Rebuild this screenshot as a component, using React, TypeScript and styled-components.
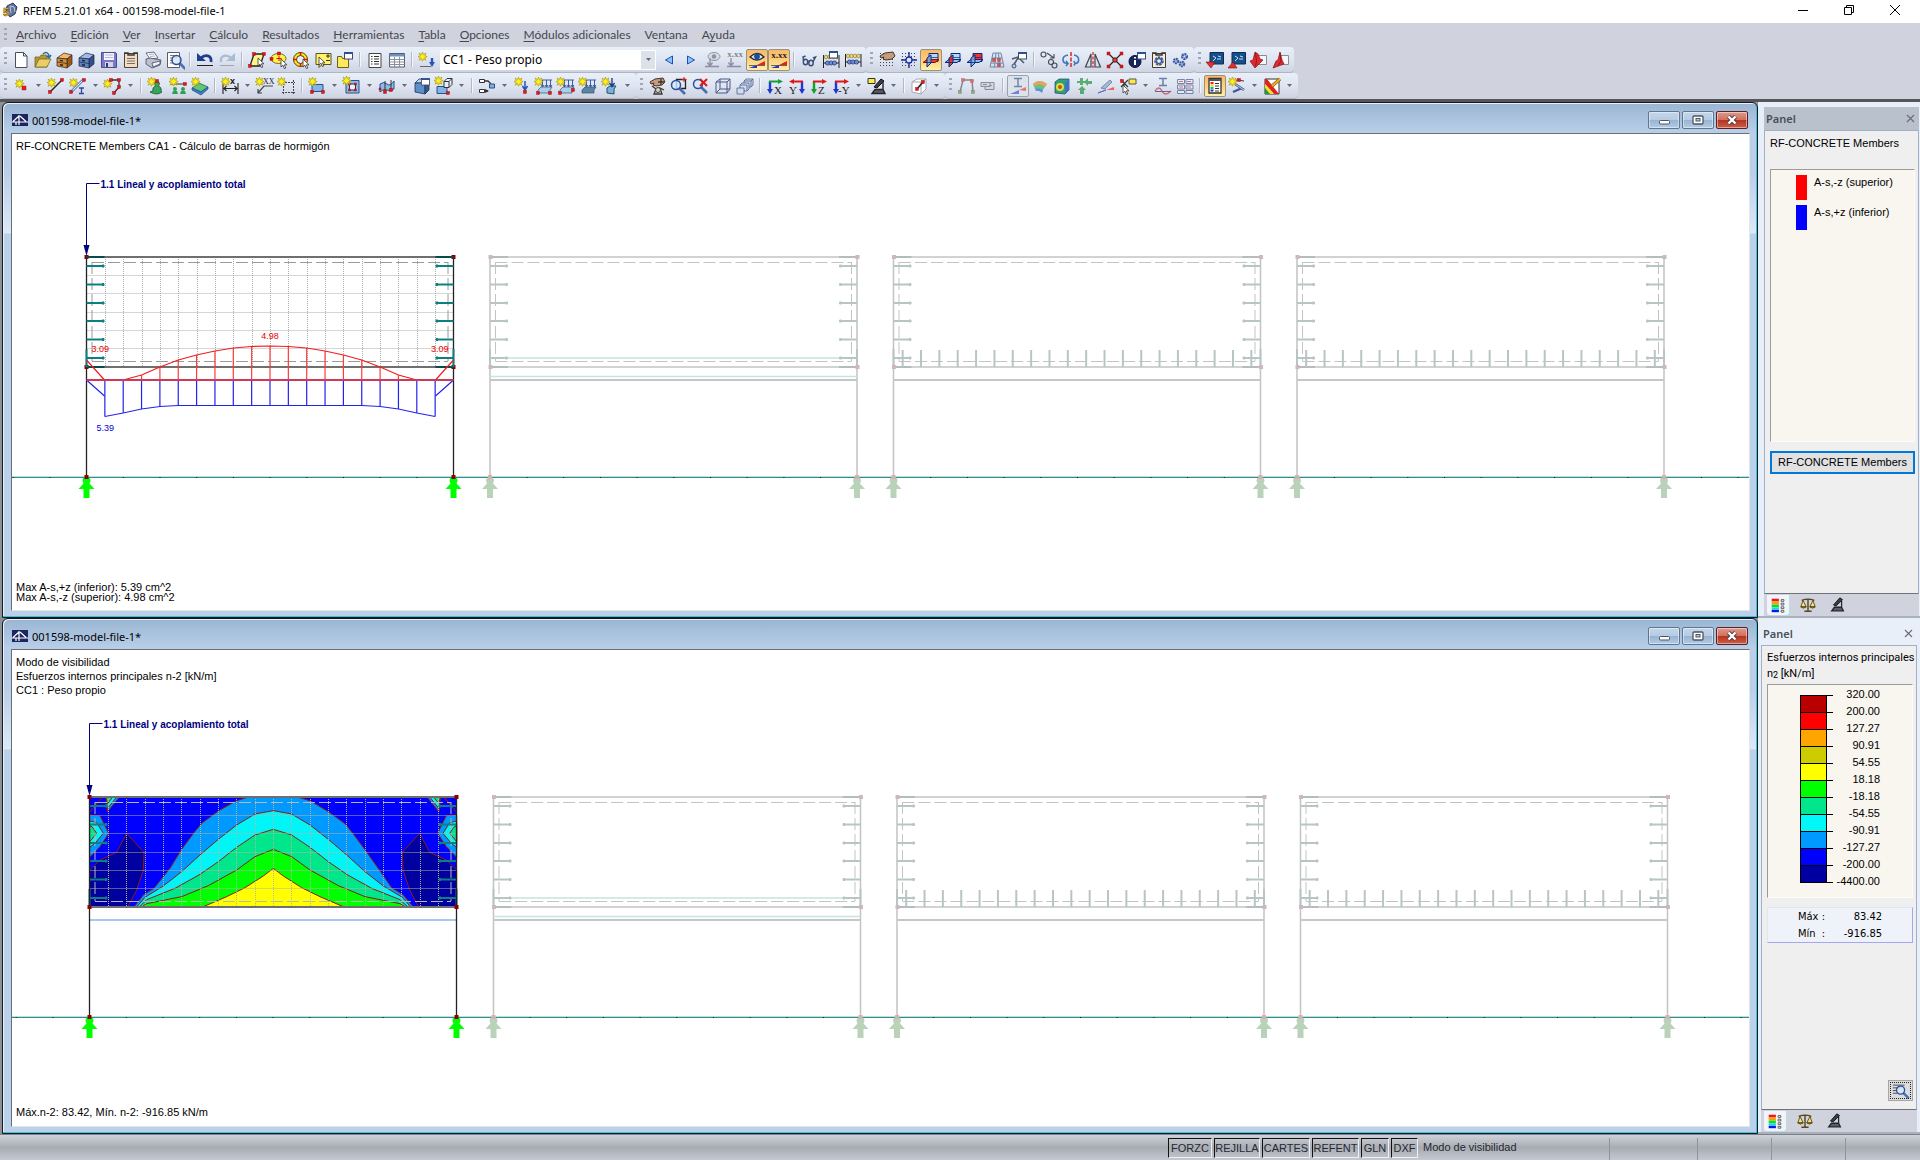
import React, { ReactNode } from 'react';
import styled, { createGlobalStyle, css } from 'styled-components';

const UI = 'Lato, "Noto Sans", sans-serif';
const SEGOE = '"Noto Sans", "Open Sans", sans-serif';
const TAHOMA = '"DejaVu Sans Condensed", "DejaVu Sans", sans-serif';
const ARIAL = '"Liberation Sans", Arial, sans-serif';

const Global = createGlobalStyle`
  *, *::before, *::after { box-sizing: border-box; }
  html, body { margin: 0; background: #d0d3dd; }
  body { font-family: ${UI}; font-size: 12px; color: #000; overflow: hidden; }
  button, select { font: inherit; color: inherit; margin: 0; }
  svg { display: block; }
`;

/* ---------- icon building blocks ---------- */

const Star = ({ x = 0, y = 0 }: { x?: number; y?: number }) => (
  <g transform={`translate(${x} ${y})`}>
    <path d="M4.500 0l1 2.600L8 1 6.700 3.600 9.200 4.600 6.600 5.600 8 8.200 5.500 6.800 4.500 9.200 3.500 6.800 1 8.200 2.400 5.600 0 4.600 2.400 3.600 1 1 3.500 2.600z" fill="#ffee1c" stroke="#a89a10" strokeWidth=".7" />
  </g>
);
const Dot = ({ x, y, c = '#e8141c', s = 4 }: { x: number; y: number; c?: string; s?: number }) => (
  <rect x={x - s / 2} y={y - s / 2} width={s} height={s} fill={c} stroke="#8c0a0a" strokeWidth=".4" />
);
const Cursor = ({ x, y }: { x: number; y: number }) => (
  <path transform={`translate(${x} ${y})`} d="M0 0v8l2-1.800L3.400 9.600l1.400-.6L3.400 5.800H6z" fill="#fff" stroke="#333" strokeWidth=".8" />
);
const Cabinet = ({ a, b, c }: { a: string; b: string; c: string }) => (
  <g stroke="#22252e" strokeWidth=".7">
    <path d="M2 8l7-5 8 2-5 4z" fill={a} />
    <path d="M12 9l5-4v9l-5 4z" fill={c} />
    <path d="M2 8l10 1v9l-10-2z" fill={b} />
    <path d="M2 12l10 1.500" />
    <path d="M5 10.500l3 .4M5 14.700l3 .5" stroke="#222" strokeWidth="1.400" />
  </g>
);
const Win = ({ x, y }: { x: number; y: number }) => (
  <g transform={`translate(${x} ${y})`}>
    <rect x=".5" y=".5" width="8" height="6.500" fill="#fff" stroke="#3b4a66" />
    <path d="M0 1.200h9" stroke="#2f4f9a" strokeWidth="1.600" />
  </g>
);
const GridDots = () => (
  <path d="M3.500 3v15M6.500 3v15M9.500 3v15M12.500 3v15M15.500 3v15" stroke="#444" strokeWidth="1" strokeDasharray="1 2" />
);
const Planes = ({ hot }: { hot: number }) => (
  <g stroke="#0c2a78" strokeLinejoin="round">
    <path d="M8 3.500h9v8H8z" fill={hot === 2 ? '#ff2a2a' : '#b4d8f6'} />
    <path d="M2 12.500l4-3h12l-4 3z" fill={hot === 0 ? '#ff3a1c' : '#8cc0ee'} stroke={hot === 0 ? '#8c1010' : '#0c2a78'} />
    <path d="M6 8l4-3v8l-4 4z" fill={hot === 1 ? '#f41c1c' : '#74aee6'} fillOpacity=".85" />
    <path d="M10 7.500h7M6 12.500h7" strokeWidth=".7" />
  </g>
);
const Abacus = ({ y = 4 }: { y?: number }) => (
  <g>
    <path d={`M2.500 ${y + 1}v13M18 ${y + 1}v13M2 ${y + 9}h16`} stroke="#222" />
    {[5, 8.5, 12, 15.5].map((x) => <circle key={x} cx={x} cy={y + 3} r="1.800" fill="#e8d878" stroke="#7c6c20" strokeWidth=".6" />)}
    {[6.5, 10, 13.5].map((x) => <circle key={x} cx={x} cy={y + 9} r="2.100" fill="#6d8ed6" stroke="#1d2c66" strokeWidth=".7" />)}
  </g>
);
const Lens = ({ x = 8, y = 8 }: { x?: number; y?: number }) => (
  <g>
    <path d={`M${x + 3} ${y + 3}l6 6`} stroke="#4a6fb0" strokeWidth="2.600" />
    <circle cx={x} cy={y} r="4.500" fill="#d5e8fb" fillOpacity=".8" stroke="#2c4f9e" strokeWidth="1.500" />
  </g>
);
const Axes = ({ h, v, mirror, label, tx = 9 }: { h: string; v: string; mirror?: boolean; label: string; tx?: number }) => (
  <g>
    <g transform={mirror ? 'translate(20 0) scale(-1 1)' : undefined}>
      <path d="M5 5v10" stroke={v} strokeWidth="2.400" />
      <path d="M2 13l3 5 3-5z" fill={v} />
      <path d="M4 5.500h11" stroke={h} strokeWidth="2" />
      <path d="M13 3l5 2.500-5 2.500z" fill={h} />
    </g>
    <text x={mirror ? 2 : tx} y="18" fontFamily="Liberation Serif, serif" fontSize="11" fill="#222">{label}</text>
  </g>
);
const Screen = ({ up }: { up?: boolean }) => (
  <g>
    <path d="M5 2.500h13.500V14H5z" fill="#174f8a" stroke="#0e2c52" />
    <path d="M8 6l3 2-3 3M12 9h4M13 6l3 1" stroke="#bfe4ff" fill="none" />
    <path d={up ? 'M1 18l5-6 4 6z' : 'M1 12h9l-4 6z'} fill="#e03030" stroke="#7e0d0d" strokeWidth=".6" />
  </g>
);
const RedArrow = ({ up }: { up?: boolean }) => (
  <g>
    <path d="M8.500 5.500h9v9h-9z" fill="#f6f6fa" stroke="#8a8d98" />
    <path d={up ? 'M9 2l2 8 2 4-11 4 3-7 2-1z' : 'M6 2l3 2 2 5 3 1-8 8-5-7 3-1z'} fill="#dc2a30" stroke="#8b1014" strokeWidth=".7" />
    <path d={up ? 'M9 3l1 8-3 5' : 'M6.500 3l1 8-1 5'} stroke="#8b1014" strokeWidth=".8" />
  </g>
);
const Loads = ({ dark }: { dark?: boolean }) => (
  <g>
    <path d="M4 14l3-3h11l-2 3v3H4z" fill={dark ? '#5a86a4' : '#a9cdec'} stroke="#33506e" strokeWidth=".7" />
    <path d="M8 4h10M8.500 4v7M12.500 4v7M16.500 4v7M7 9l1.500 2 1.500-2M11 9l1.500 2 1.500-2M15 9l1.500 2 1.500-2" stroke="#2a4f9e" strokeWidth=".9" fill="none" />
    <Star y={1} />
  </g>
);
const Scope = ({ x = 0, y = 0 }: { x?: number; y?: number }) => (
  <g transform={`translate(${x} ${y})`}>
    <path d="M12 2l3 2-7 7-3-1z" fill="#3b3e46" stroke="#111" />
    <path d="M14 5v7M6 12.500h8l2 4H3z" fill="#5a5d66" stroke="#24262b" strokeWidth="1.400" />
  </g>
);
const Hand = () => (
  <path d="M3 6l5-3 8-1 2 4-3 3-6 1-3-1 1-2-3 1z" fill="#c79c7c" stroke="#33251c" strokeWidth=".9" />
);
const Value = ({ y = 8 }: { y?: number }) => (
  <text x="10" y={y} fontFamily="Liberation Serif, serif" fontWeight="bold" fontSize="9" textAnchor="middle" fill="#222">x.xx</text>
);
const Ramp = () => (
  <g>
    <path d="M2 18h8v-3z" fill="#2534d8" />
    <path d="M10 15l8-4v4z" fill="#f01c1c" />
    <path d="M2 15.500h16" stroke="#444" strokeWidth=".8" />
  </g>
);

const ICONS: Record<string, ReactNode> = {
  new: <path d="M4.500 2.500h8l3.500 3.500v11.500H4.500zM12.500 2.500V6H16" fill="#fff" stroke="#4c4f57" />,
  open: <g strokeWidth=".7" stroke="#6b5a16"><path d="M2 7h5l1-2h5l1 2v10H2z" fill="#b89a34" /><path d="M2 17l4-8h12l-4 8z" fill="#e8cf6a" /><path d="M10 4c3-3 6-1 6 3M13.500 5.500L16 8l2-3" fill="none" stroke="#2f6c9c" strokeWidth="1.500" /></g>,
  orange: <Cabinet a="#f0b96c" b="#d98c2e" c="#9a5c14" />,
  blue: <Cabinet a="#9db9ea" b="#5c83cc" c="#2f4f96" />,
  save: <g><path d="M2.500 2.500h14l1 1v14H2.500z" fill="#7b78c9" stroke="#4b4a8c" /><path d="M5 3h10v7H5z" fill="#f3f3fb" /><path d="M6 5h8M6 7.500h8" stroke="#b8b8cc" /><path d="M6 12h8v5H6z" fill="#d4d4e6" /><path d="M7 13h2v4H7z" fill="#333a66" /></g>,
  clip: <g><path d="M3.500 3.500h13v14h-13z" fill="#f3dcc4" stroke="#4e4236" /><path d="M3 3h4v2h6V3h4" fill="none" stroke="#3a3733" strokeWidth="1.500" /><path d="M6 8.500h8M6 11h8M6 13.500h8" stroke="#7a6d5e" /></g>,
  print: <g stroke="#454b5c" strokeWidth=".8"><path d="M3 3l8-1 4 6-8 1z" fill="#fff" /><path d="M3 9l4-1 11 2-1 5-8 3-6-4z" fill="#b9c0d2" /><path d="M9 13l8-2v3l-7 3z" fill="#f0f2f8" /><path d="M6 4.500l5-.5M7 6.500l5-.5" stroke="#99a" /></g>,
  preview: <g><path d="M2.500 2.500h12v15h-12z" fill="#fff" stroke="#5a5d66" /><path d="M5 5.500h7M5 8h7M5 10.500h3M5 13h3" stroke="#777" /><Lens x={11.5} y={10} /></g>,
  undo: <g><path d="M6 8c4-4 11-3 10 4" fill="none" stroke="#1d3f8a" strokeWidth="2.800" /><path d="M2 3v8h9z" fill="#1d3f8a" /><path d="M2 15.500h16" stroke="#222" /></g>,
  redo: <g><path d="M14 8C10 4 3 5 4 12" fill="none" stroke="#a9bcd0" strokeWidth="2.400" /><path d="M18 3v8H9z" fill="#a9bcd0" /><path d="M3 15.500h14" stroke="#a0a5b0" /></g>,
  plane: <g><path d="M7 4h10l-4 12H3z" fill="#fff38a" stroke="#222" strokeWidth="1.300" /><Dot x={7} y={4} s={3} /><Dot x={17} y={4} s={3} /><Dot x={3} y={16} s={3} /><Cursor x={11} y={8} /></g>,
  ellipse: <g><ellipse cx="9.500" cy="8.500" rx="7.500" ry="5" fill="#fff04a" stroke="#77702a" /><path d="M10 6v5M7.500 8.500h5" stroke="#d11" /><Dot x={2.5} y={9} s={3} /><Dot x={10} y={3.5} s={3} /><Cursor x={12} y={9} /></g>,
  ring: <g><circle cx="9.500" cy="9.500" r="7" fill="#ffe61a" stroke="#4a4410" /><circle cx="9.500" cy="9.500" r="4" fill="#e8ecf6" stroke="#4a4410" /><path d="M9.500 2v4M9.500 13v4M2 9.500h4M13 9.500h4" stroke="#d11" strokeWidth="1.500" /><Cursor x={12} y={9} /></g>,
  note: <g><path d="M3 3.500h15v11H9l-3 3v-3H3z" fill="#fff26e" stroke="#5a5320" /><path d="M13 6h4M15 4v4M13 10.500h4" stroke="#333" /><Cursor x={6} y={7} /></g>,
  noteWin: <g><path d="M2.500 6.500h4l1 2h6v9h-11z" fill="#ffe95a" stroke="#6a611e" /><Win x={9} y={2} /></g>,
  list: <g><path d="M4 3.500h12v14H4z" fill="#fff" stroke="#444" /><path d="M6 6.500h1.500M9 6.500h5M6 9h1.500M9 9h5M6 11.500h1.500M9 11.500h5M6 14h1.500M9 14h5" stroke="#333" /></g>,
  table: <g><path d="M2.500 3.500h15v13.500h-15z" fill="#fff" stroke="#555b68" /><path d="M2.500 4h15v2.500h-15z" fill="#6d8fc4" /><path d="M2.500 9.500h15M2.500 12h15M2.500 14.500h15M7.500 7v10M12.500 7v10" stroke="#8a8f9c" /></g>,
  loadNew: <g><Star x={1} y={2} /><path d="M3 16.500h11" stroke="#666" /><path d="M15 8v6" stroke="#2b56b8" strokeWidth="2.400" /><path d="M12 12l3 5 3-5z" fill="#2b56b8" /></g>,
  prev: <path d="M13.500 6v8L6.500 10z" fill="#8cc4f8" stroke="#1c4fb8" />,
  next: <path d="M6.500 6v8L13.500 10z" fill="#8cc4f8" stroke="#1c4fb8" />,
  ghostEye: <g opacity=".5"><ellipse cx="11" cy="6.500" rx="6" ry="4" fill="#c7d2e4" stroke="#444" /><circle cx="11" cy="6.500" r="2.200" fill="#345" /><path d="M7 8v8M4.500 12.500l2.500 3.500 2.500-3.500M2 16.500h14" stroke="#446" strokeWidth="1.400" fill="none" /></g>,
  ghostVal: <g opacity=".5"><Value y={7} /><path d="M6 8v8M3.500 12.500l2.500 3.500 2.500-3.500M2 16.500h14" stroke="#446" strokeWidth="1.400" fill="none" /></g>,
  eye: <g><path d="M3 7q7-7 14 0q-7 6-14 0z" fill="#dbe9f7" stroke="#1e2a40" strokeWidth="1.300" /><circle cx="10" cy="6.500" r="2.900" fill="#1d4f9a" /><Ramp /></g>,
  val: <g><Value /><Ramp /></g>,
  glasses: <g fill="#cfdcf2" stroke="#3a4c78" strokeWidth="1.400"><ellipse cx="6.500" cy="12" rx="2.200" ry="2.800" /><ellipse cx="12" cy="13" rx="2.200" ry="2.800" /><path d="M4.500 11L4 7l2.500-1M14 12l2.500-5-2.500 1M8.500 11l2 1" fill="none" /></g>,
  abWin: <g><Abacus y={4} /><Win x={8} y={1} /></g>,
  abacus: <Abacus y={3} />,
  handGrid: <g><GridDots /><Hand /></g>,
  snap: <g><GridDots /><path d="M10 2v16M2 10h16" stroke="#1c2ea0" strokeWidth="1.400" /><circle cx="10" cy="10" r="3" fill="#dfe8fb" stroke="#1c2ea0" strokeWidth="1.300" /></g>,
  plane0: <Planes hot={0} />,
  plane1: <Planes hot={1} />,
  plane2: <Planes hot={2} />,
  mesh: <g opacity=".75"><path d="M6 3h8l3 14H3zM5 8h10M4 13h12M9 3L7.500 17M11.500 3l1 14" fill="#c9e2f3" stroke="#4c6b8a" /><Dot x={7} y={10} s={3} /><Dot x={12} y={10} s={3} /><Dot x={12} y={15} s={3} /></g>,
  tools: <g><path d="M4 16L9 8M3 9l6-2 6 6" stroke="#4b5870" strokeWidth="1.500" fill="none" /><circle cx="5" cy="16" r="2" fill="#b8cbe6" stroke="#3c5276" /><Win x={9} y={2} /></g>,
  rings: <g fill="none" stroke="#444b57" strokeWidth="1.100"><circle cx="4.500" cy="4.500" r="2.500" /><circle cx="12" cy="12" r="2.500" /><circle cx="15.500" cy="15.500" r="2.500" /><path d="M8 3l7 5M15 4v4h-4" /></g>,
  rotate: <g fill="none"><path d="M7 5C0 6 1 13 6 13.500M13 5c6 1 6 8 1 8.500M5 11l2 2.500L5 16M13 11l1 2.500-1 2" stroke="#3f78b8" strokeWidth="1.600" /><path d="M10 2v16" stroke="#e01616" strokeWidth="1.400" strokeDasharray="4 1.500" /></g>,
  mirror: <g fill="none"><path d="M8 4v13H2.500zM12 4v13h5.500z" stroke="#40444e" strokeWidth="1.200" /><path d="M10 2v16" stroke="#e01616" strokeWidth="1.200" strokeDasharray="3 1.500" /></g>,
  cross: <g><path d="M3 3l14 14M17 3L3 17" stroke="#222" strokeWidth="1.200" /><Dot x={3.5} y={3.5} s={3} /><Dot x={16.5} y={3.5} s={3} /><Dot x={3.5} y={16.5} s={3} /><Dot x={16.5} y={16.5} s={3} /><circle cx="10" cy="10" r="2.200" fill="#f04040" stroke="#511" /></g>,
  info: <g><circle cx="8" cy="11.500" r="6" fill="#16265e" stroke="#0a1232" /><path d="M8 10v5M8 7v1.500" stroke="#fff" strokeWidth="2" /><Win x={10} y={2} /></g>,
  gearPage: <g><path d="M3.500 3.500h13v14h-13z" fill="#f7eedd" stroke="#453c30" /><path d="M3 3h4v2h6V3h4" fill="none" stroke="#3a3733" strokeWidth="1.500" /><circle cx="10" cy="11" r="3.500" stroke="#3f5f9c" strokeWidth="2.600" strokeDasharray="2.200 .8" /><circle cx="10" cy="11" r="2.600" stroke="#3f5f9c" strokeWidth="1.500" /></g>,
  gears: <g fill="none" stroke="#3d5aa6"><circle cx="5" cy="11" r="2" strokeWidth="2.500" strokeDasharray="1.600 .5" /><circle cx="13.500" cy="6.500" r="2.300" strokeWidth="2.500" strokeDasharray="1.800 .6" /><circle cx="11" cy="14" r="2" strokeWidth="2.500" strokeDasharray="1.600 .5" /></g>,
  scrDown: <Screen />,
  scrUp: <Screen up />,
  redDown: <RedArrow />,
  redUp: <RedArrow up />,

  node: <g><Star x={4} y={3} /><Dot x={13} y={12} c="#f01c1c" /></g>,
  line: <g><path d="M4 16L16 4" stroke="#222" strokeWidth="1.400" /><Star x={1} y={2} /><Dot x={4} y={16} s={3} /><Dot x={16} y={4} s={3} /></g>,
  beam: <g><path d="M3 16L15 4" stroke="#6b93c8" strokeWidth="3" /><path d="M3 16L15 4" stroke="#d6e6f8" /><Star x={1} y={2} /><Dot x={3} y={16} s={3} /><Dot x={16} y={4} s={3} /><path d="M11 12h5M13.500 12v5M11 17.500h5" stroke="#2b4aa0" strokeWidth="1.300" /></g>,
  poly: <g><path d="M3 7l5-3h8v7l-5 6" fill="none" stroke="#333" strokeWidth="1.300" /><Star x={0} y={3} /><Dot x={8} y={4} s={3} /><Dot x={16} y={4} s={3} /><Dot x={16} y={11} s={3} /><Dot x={11} y={17} s={3} /></g>,
  sup: <g><path d="M7 15q-1-4 3-5a2.500 2.500 0 112 0q4 1 3 5l1 1q-5 4-12 0z" fill="#3aa35c" stroke="#135a2a" strokeWidth=".8" /><Star x={1} y={1} /><Dot x={11} y={5} s={3} /></g>,
  sups: <g><path d="M3 8h14" stroke="#333" /><circle cx="7" cy="13" r="2" fill="#2fa052" /><path d="M4 18l1-3h4l1 3zM12 18l1-3h4l1 3z" fill="#2fa052" /><circle cx="15" cy="13" r="2" fill="#2fa052" /><Star x={1} y={1} /><Dot x={17} y={8} s={3} /></g>,
  pad: <g><path d="M2 12l7-5 9 4-7 5z" fill="#5cc878" stroke="#1f6a3a" strokeWidth=".8" /><path d="M2 12v2l9 5 7-6v-2l-7 5z" fill="#3f7ec8" stroke="#234a86" strokeWidth=".7" /><Star x={1} y={1} /></g>,
  dim: <g><path d="M3 7v11M18 7v11M4 12.500h13M6.500 10L4 12.500 6.500 15M14.500 10l2.500 2.500-2.500 2.500" fill="none" stroke="#222" strokeWidth="1.100" /><text x="10" y="8" fontFamily="Liberation Sans, sans-serif" fontWeight="bold" fontSize="9" fill="#111">x</text><Star x={1} y={1} /></g>,
  xx: <g><path d="M3 17L9 10h9M3 13v4h4" fill="none" stroke="#444" strokeWidth="1.200" /><text x="8" y="8" fontFamily="Liberation Serif, serif" fontSize="8" fill="#222">XX</text><Star x={0} y={1} /></g>,
  dashed: <g><path d="M5 6.500h13M5 16.500h13M6.500 4v15M16.500 4v15" stroke="#444" strokeDasharray="2 1" /><Star x={0} y={1} /></g>,
  surf: <g><path d="M5 8.500h11v7H5z" fill="#84b4e6" stroke="#2c5084" /><Star x={1} y={1} /><Dot x={5} y={16} s={3} /><Dot x={16} y={16} s={3} /></g>,
  opening: <g><path d="M4 4.500h13v12.500H4z" fill="#8fbcea" stroke="#2c5084" /><path d="M7.500 8h6v6h-6z" fill="#eef" stroke="#333" /><Dot x={7.5} y={8} s={2} /><Dot x={13.5} y={8} s={2} /><Dot x={7.5} y={14} s={2} /><Dot x={13.5} y={14} s={2} /><Star /></g>,
  shell: <g><path d="M3 8q4-3 7 0t7-3v8q-4 3-7 1t-7 2z" fill="#8fbbe6" stroke="#2c5084" /><path d="M8 5v11M14 4v10" stroke="#333" /><Dot x={3} y={13} s={2} /><Dot x={8} y={16} s={3} /><Dot x={14} y={14} s={3} /></g>,
  solid: <g stroke="#1d3456" strokeWidth=".8"><path d="M3 7l4-4h10l-4 4z" fill="#b8d4f0" /><path d="M3 7h10v11l-10-2z" fill="#5f8fc8" /><path d="M13 7l4-4v11l-4 4z" fill="#34598e" /><Win x={9} y={2} /></g>,
  solids: <g><path d="M3 10.500h10v7H3z" fill="#84b4e6" stroke="#2c5084" /><path d="M10 5.500h5v6h-5zM10 5.500l3-3h5v6l-3 3M15 5.500l3-3" fill="#e8eef8" stroke="#333" /><Star /><Dot x={14} y={17} s={3} /></g>,
  connect: <g><path d="M8 5h3l3 3M8 15h3" stroke="#333" strokeWidth="1.300" fill="none" /><path d="M2.500 3.500h5v3h-5zM2.500 13.500h5v3h-5z" fill="#fff" stroke="#333" /><path d="M12.500 8h5v4h-5z" fill="#7fb0e8" stroke="#2c5084" /><path d="M8 13l4 2-4 2z" fill="#333" /></g>,
  loadNode: <g><path d="M13 5v8M10.500 10l2.500 4 2.500-4" stroke="#2b56b8" strokeWidth="1.500" fill="none" /><Star x={2} y={1} /><Dot x={13} y={16} s={3} /></g>,
  loadLine: <g><Loads /><Dot x={4} y={17} s={3} /><Dot x={16} y={17} s={3} /></g>,
  loadSurf: <g><Loads /><Dot x={4} y={17} s={3} /><Dot x={17} y={14} s={3} /></g>,
  loadFree: <Loads dark />,
  loadSolid: <g><path d="M7 12l3-2h6l-2 3v5l-7-1z" fill="#78b4d8" stroke="#24506e" /><path d="M12 2v8M9.500 7l2.500 3.500L14.500 7" stroke="#1c3d8c" strokeWidth="1.400" fill="none" /><Star x={1} y={1} /></g>,
  pan: <g><Hand /><path d="M5 10l4 3-2 5h8l-2-6 4 2M14 3v6M11 6h6" stroke="#3d352e" strokeWidth="1.300" fill="none" /><circle cx="11" cy="14" r="2.500" fill="#d8d2c8" stroke="#443" /></g>,
  zoomWin: <g><path d="M7.500 3.500h9v9h-9z" fill="none" stroke="#222" strokeWidth="1.300" /><path d="M15 1v5M12.500 3.500h5" stroke="#d11" /><Lens x={7} y={9} /></g>,
  zoomX: <g><Lens x={7} y={8} /><path d="M9 3l7 7M16 3L9 10" stroke="#e01818" strokeWidth="2" /></g>,
  cube: <path d="M3 6h11v11H3zM7 3h10v10l-3 4M3 6l4-3M14 6l3-3M7 3v10h10M3 17l4-4" fill="#dfe6f6" fillOpacity=".5" stroke="#495a86" />,
  cubes: <g fill="#d2dcf0" stroke="#5c6b94" strokeWidth=".9"><path d="M9 5l2-2h7v6l-2 2H9zM9 5h7v6M16 5l2-2" /><path d="M5 9l2-2h7v6l-2 2H5zM5 9h7v6" /><path d="M2 12h7v6H2z" /></g>,
  axX: <Axes h="#14a032" v="#2038d0" label="X" />,
  axY: <Axes h="#e01818" v="#2038d0" mirror label="Y" />,
  axZ: <Axes h="#e01818" v="#14a032" label="Z" />,
  axNY: <Axes h="#e01818" v="#2038d0" label="-Y" tx={7} />,
  scope: <g><Scope x={3} y={1} /><path d="M2 2.500h7v5H2z" fill="#ffef3a" stroke="#333" /></g>,
  visBox: <g><path d="M3 6l5-3h9v10l-5 5-9-2zM3 6h9v12M12 6l5-3" fill="#fff" stroke="#a5a8b2" /><path d="M8 13l6-7" stroke="#222" strokeWidth="1.600" /><Dot x={8} y={13} s={3} /><Dot x={14} y={6} s={3} /></g>,
  frame: <g opacity=".6"><path d="M4 16L7 4h9l1 12" fill="none" stroke="#444" strokeWidth="1.400" /><Dot x={7} y={4} s={3} /><Dot x={16} y={5} s={3} /><Dot x={4} y={16} c="#3a3" s={3} /><Dot x={17} y={16} c="#3a3" s={3} /></g>,
  model: <g opacity=".6"><path d="M3 6.500h9v4H3zM10 6.500h6v7H7v-3" fill="#cdd1dc" stroke="#555" /><path d="M5 8.500h4M11 9.500h3" stroke="#555" /></g>,
  ibeam: <g opacity=".65"><path d="M6 2.500h8M10 2.500v8M6 10.500h8" stroke="#3a5490" strokeWidth="1.500" /><path d="M2 18h9v-4z" fill="#3d4cd0" /><path d="M11 14l7-3v4z" fill="#e83c3c" /></g>,
  rSurf: <g opacity=".75"><path d="M3 8q6-6 14 0l-5 7q-3-3-7-2z" fill="#3dbb5a" /><path d="M3 8q6-6 14 0l-2 3q-5-5-10-1z" fill="#ef8a30" /><path d="M5 13q4-2 8 1l-1 3q-3-3-6-2z" fill="#3a6fe0" /></g>,
  rSolid: <g><path d="M3 6l4-3h10v11l-4 4-10-1z" fill="#2fa07a" stroke="#246" strokeWidth=".7" /><circle cx="8" cy="11" r="4" fill="#c8e83c" /><circle cx="8" cy="11" r="2" fill="#e84020" /><path d="M13 7l4-4v11l-4 4z" fill="#3f6fd0" /></g>,
  rSup: <g opacity=".75" fill="#2c9c48"><path d="M8 10l4 4h-2v4H6v-4H4z" /><path d="M10 6l4-4v3h4v3h-4v2zM6 2h3v3h3v2H9v2H6V7H3V5h3z" /></g>,
  pencil: <g opacity=".75"><path d="M5 12l9-8 2 2-7 7z" fill="#8fa9d8" stroke="#456" strokeWidth=".8" /><path d="M2 17l8-3z" stroke="#3a46c8" /><path d="M10 14l8-3v3z" fill="#e43c3c" /></g>,
  starCur: <g><path d="M3 4l7 7M10 4l-7 7M6 8v8" stroke="#333" strokeWidth="1.200" /><Dot x={4} y={5} s={3} /><Cursor x={5} y={9} /><path d="M11 3h7v5h-7z" fill="#ffe94a" stroke="#555" /></g>,
  curve: <g opacity=".7"><path d="M6 2.500h8M10 2.500v7M6 9.500h8" stroke="#3a5490" strokeWidth="1.500" /><path d="M2 15q4-6 7 0t9 0" fill="none" stroke="#d33" strokeWidth="1.300" /><path d="M2 15.500h16" stroke="#338" /></g>,
  tables: <g opacity=".7"><path d="M2.500 3.500h7v4h-7zM11 3.500h7v4h-7zM2.500 9h7v4h-7zM11 9h7v4h-7zM2.500 14.500h7v3h-7zM11 14.500h7v3h-7z" fill="#eef" stroke="#4c5c8c" /><path d="M4 5.500h4M12 5.500h4M4 11h4M12 11h4" stroke="#c44" /></g>,
  panel: <g><path d="M4 2.500h12V17H4z" fill="#fff" stroke="#333" strokeWidth="1.300" /><path d="M4 4h12" stroke="#555" strokeWidth="2" /><path d="M5.500 7h3" stroke="#e22" strokeWidth="2" /><path d="M5.500 9.500h3" stroke="#ec2" strokeWidth="2" /><path d="M5.500 12h3" stroke="#2b4" strokeWidth="2" /><path d="M5.500 14.500h3" stroke="#23d" strokeWidth="2" /><path d="M10 7.500h4M10 10h4M10 12.500h4M10 15h4" stroke="#333" /></g>,
  starTools: <g><path d="M8 8l9 6M6 16l9-4" stroke="#405a90" strokeWidth="2.400" /><path d="M8 8l9 6" stroke="#dfe8f6" strokeWidth=".8" /><path d="M9 4l8 1" stroke="#333" /><Dot x={12} y={4} s={3} /><Star x={1} y={1} /></g>,
  rainbow: <g><path d="M3 3h14v15H3z" fill="#fff" stroke="#333" /><path d="M3 3h2l12 15h-5L3 8z" fill="#e22020" /><path d="M3 8l9 10H8l-5-6z" fill="#f4e020" /><path d="M3 12l5 6H3z" fill="#1f9a3a" /><path d="M10 10l8-7" stroke="#7a5a10" strokeWidth="3.200" /><path d="M10 10l8-7" stroke="#f0b428" strokeWidth="2" /></g>,

  legend: <g><path d="M3 3h8v3H3z" fill="#f01818" /><path d="M3 6.200h8v3H3z" fill="#ff9a10" /><path d="M3 9.400h8v3H3z" fill="#12e012" /><path d="M3 12.600h8v2.600H3z" fill="#10d8e8" /><path d="M3 15.400h8v2.600H3z" fill="#1010e8" /><path d="M13.500 4h3v2h-3zM13.500 8h3v2h-3zM13.500 12h3v2h-3zM13.500 16h3v2h-3z" fill="#fff" stroke="#555" /></g>,
  scales: <g fill="none" stroke="#57481a"><path d="M10 3v13M6 17h8M3 5q7-3 14 0" strokeWidth="1.600" /><path d="M4.500 5L2 12h6zM15.500 5L12 12h6z" fill="#f6e27a" /><path d="M2 12q3 3 6 0zM12 12q3 3 6 0z" fill="#b3902a" /></g>,
  microscope: <Scope />,
  detail: <g><path d="M1 3.500h13M1 6.500h9M1 9.500h5M1 12.500h5" stroke="#444" /><Lens x={9.5} y={9} /></g>,
};

const Icon = ({ name, size = 20 }: { name: string; size?: number }) => (
  <svg width={size} height={size} viewBox="0 0 20 20" fill="none" aria-hidden="true">{ICONS[name]}</svg>
);

/* ---------- application chrome ---------- */

const Shell = styled.div`
  display: flex;
  flex-direction: column;
  height: 100vh;
  background: #d0d3dd;
`;
const TitleBar = styled.header`
  display: flex;
  align-items: center;
  height: 23px;
  background: #fff;
  padding: 0 2px 3px;
`;
const AppTitle = styled.h1`
  flex: 1;
  margin: 2px 0 0 5px;
  font-family: ${SEGOE};
  font-size: 11px;
  font-weight: 400;
  line-height: 20px;
`;
const SysButton = styled.button`
  width: 46px;
  height: 20px;
  border: 0;
  padding: 0;
  background: none;
  display: grid;
  place-items: center;
`;
const MenuBar = styled.nav`
  display: flex;
  align-items: center;
  height: 24px;
  padding-left: 4px;
`;
const Grip = styled.span`
  width: 3px;
  height: 15px;
  background: repeating-linear-gradient(#a2a7b4 0 2px, transparent 2px 5px);
`;
const MenuItem = styled.button`
  border: 0;
  background: none;
  padding: 0 7px;
  line-height: 24px;
  color: #44474f;
  white-space: nowrap;
  u { text-underline-offset: 2px; }
  &:first-of-type { margin-left: 2px; }
`;
const ToolRow = styled.div`
  display: flex;
  height: 26px;
`;
const ToolBar = styled.div`
  display: flex;
  align-items: center;
  padding-right: 2px;
  border-radius: 4px;
  background: linear-gradient(#eaf0f9, #dfe5f1 50%, #cdd3e1);
  border-bottom: 1px solid #aeb4c2;
  ${Grip} { margin: 0 3px 0 4px; }
`;
const ToolButton = styled.button<{ $state?: 'hot' | 'held' }>`
  display: grid;
  place-items: center;
  width: 22px;
  height: 22px;
  padding: 0;
  border: 1px solid transparent;
  border-radius: 2px;
  background: none;
  ${(p) => p.$state === 'hot' && css`
    border-color: #9a917c;
    background: linear-gradient(#f9b869, #fdd07c 50%, #fff0a8);
  `}
  ${(p) => p.$state === 'held' && css`
    border-color: #9aa3a8;
    background: #dde3ea;
  `}
`;
const DropButton = styled.button`
  width: 13px;
  height: 22px;
  border: 0;
  padding: 0;
  background: none;
  display: grid;
  place-items: center;
`;
const Sep = styled.span`
  width: 2px;
  height: 15px;
  margin: 0 3px;
  background: linear-gradient(90deg, #b3b8c4 50%, #f4f6fb 50%);
`;
const Combo = styled.label`
  position: relative;
  width: 216px;
  height: 20px;
  margin: 0 2px;
  background: #fff;
  font-family: ${SEGOE};
  select {
    width: 100%;
    height: 20px;
    border: 0;
    padding: 0 18px 0 3px;
    background: #fff;
    appearance: none;
    line-height: 20px;
  }
`;
const ComboArrow = styled.span`
  position: absolute;
  top: 1px;
  right: 1px;
  bottom: 1px;
  width: 14px;
  display: grid;
  place-items: center;
  background: #dde1ea;
  pointer-events: none;
`;
const Arrow = () => (
  <svg width="5" height="3" aria-hidden="true"><path d="M0 0h5L2.500 3z" fill="#666b76" /></svg>
);

/* '|' is a separator, '@' the load case list, '*' a highlighted button, '#' a held one, '>' adds a drop-down arrow */
const ROW1 = [
  'new open orange blue save clip print preview | undo redo | plane ellipse ring note noteWin | list table | loadNew @ prev next ghostEye ghostVal *eye *val | glasses abWin abacus',
  'handGrid snap *plane0 plane1 plane2 mesh tools | rings rotate mirror cross info gearPage gears',
  'scrDown scrUp redDown redUp',
];
const ROW2 = [
  'node> line beam> poly> | sup sups pad | dim> xx dashed | surf> opening> shell> solid solids> | connect> loadNode loadLine loadSurf loadFree loadSolid>',
  'pan zoomWin zoomX cube cubes | axX axY axZ axNY> scope> | visBox>',
  'frame model | #ibeam rSurf rSolid rSup pencil starCur> curve tables | *panel starTools> rainbow>',
];

const Tools = ({ spec }: { spec: string }) => (
  <ToolBar role="toolbar">
    <Grip />
    {spec.split(' ').map((item, i) => {
      if (item === '|') return <Sep key={i} />;
      if (item === '@') {
        return (
          <Combo key={i}>
            <select aria-label="Caso de carga"><option>CC1 - Peso propio</option></select>
            <ComboArrow><Arrow /></ComboArrow>
          </Combo>
        );
      }
      const name = item.replace(/[*#>]/g, '');
      return (
        <React.Fragment key={i}>
          <ToolButton aria-label={name} $state={item[0] === '*' ? 'hot' : item[0] === '#' ? 'held' : undefined}>
            <Icon name={name} />
          </ToolButton>
          {item.endsWith('>') && <DropButton aria-label={`${name} opciones`}><Arrow /></DropButton>}
        </React.Fragment>
      );
    })}
  </ToolBar>
);

const MENU: [string, string, string][] = [
  ['', 'A', 'rchivo'], ['', 'E', 'dición'], ['', 'V', 'er'], ['', 'I', 'nsertar'], ['', 'C', 'álculo'],
  ['', 'R', 'esultados'], ['', 'H', 'erramientas'], ['', 'T', 'abla'], ['', 'O', 'pciones'],
  ['', 'M', 'ódulos adicionales'], ['Ve', 'n', 'tana'], ['A', 'y', 'uda'],
];

/* ---------- MDI windows ---------- */

const Workspace = styled.main`
  flex: 1;
  min-height: 0;
  display: grid;
  grid-template-columns: minmax(0, 1fr) 162px;
  grid-template-rows: 1fr 1fr;
  border-top: 3px solid #55565a;
  background: #8d9095;
`;
const Window = styled.section`
  display: flex;
  flex-direction: column;
  min-height: 0;
  margin-left: 2px;
  padding: 0 7px 6px 8px;
  border: 1px solid #15181c;
  border-radius: 6px 6px 0 0;
  box-shadow: inset -1px -1px 0 #35c4e4, inset 1px 1px 0 #e6f1fb;
  background: linear-gradient(#9ab5d2, #b9cfe9 30px, #b9cfe9 70px, #dce9f7 130px, #b9d1ea 131px);
`;
const WindowTitle = styled.div`
  display: flex;
  align-items: center;
  gap: 2px;
  height: 30px;
  flex: none;
  padding: 4px 2px 0 1px;
  h2 {
    flex: 1;
    margin: 0 0 0 2px;
    font-family: ${SEGOE};
    font-size: 11px;
    font-weight: 400;
  }
`;
const WinButton = styled.button<{ $close?: boolean }>`
  display: grid;
  place-items: center;
  width: 32px;
  height: 18px;
  padding: 0;
  border: 1px solid ${(p) => (p.$close ? '#5d1f24' : '#5f7690')};
  border-radius: 2px;
  box-shadow: inset 0 0 0 1px rgba(255, 255, 255, 0.45);
  background: ${(p) => (p.$close
    ? 'linear-gradient(#dc9a8c, #cf6f5c 50%, #b5321c 50%, #c9604a)'
    : 'linear-gradient(#c3d6ea, #b6cce4 50%, #97b3d2 50%, #b3cbe6)')};
`;
const Viewport = styled.div`
  position: relative;
  flex: 1;
  min-height: 0;
  display: flex;
  flex-direction: column;
  justify-content: space-between;
  border: 1px solid #6b6e72;
  border-right-color: #e4e7ea;
  border-bottom-color: #e4e7ea;
  background: #fff;
  font-family: ${ARIAL};
  font-size: 11px;
`;
const Canvas = styled.svg`
  position: absolute;
  inset: 0;
  width: 100%;
  height: 100%;
`;
const Caption = styled.p<{ $line: number }>`
  position: relative;
  margin: 0;
  padding: 5px 4px 8px;
  line-height: ${(p) => p.$line}px;
  white-space: pre-line;
`;

const W = 367;
const STEP = W / 20;

const Support = ({ x, color }: { x: number; color: string }) => (
  <path d={`M${x - 4} 481a4 4 0 018 0l-1 2.500 5 5.500h-5v9h-6v-9h-5l5-5.500z`} fill={color} />
);

const Anchors = ({ x, color, dark, bottom }: { x: number; color: string; dark: string; bottom?: boolean }) => {
  const rows = [266, 284.5, 303, 321, 339.5, 358];
  const side = (a: number, s: number) => (
    <g>
      {rows.map((y) => <path key={y} d={`M${a} ${y}h${18 * s}`} stroke={color} strokeWidth="2" />)}
      {rows.map((y) => <path key={y} d={`M${a + 16.5 * s} ${y - 1.5}v3`} stroke={color} strokeWidth="2" />)}
      <path d={`M${a} 257h${18 * s}M${a} 367h${18 * s}`} stroke={dark} strokeWidth="2" />
      <path d={`M${a} 349v18`} stroke={color} strokeWidth="2" />
    </g>
  );
  return (
    <g>
      {side(x, 1)}
      {side(x + W, -1)}
      {bottom && Array.from({ length: 20 }, (_, i) => (
        <path key={i} d={`M${x + STEP * (i + 0.5)} 350v17`} stroke={color} strokeWidth="2" />
      ))}
    </g>
  );
};

const Dashes = ({ x, color }: { x: number; color: string }) => (
  <path d={`M${x + 5.5} 262.500h${W - 11}M${x + 5.5} 361.500h${W - 11}M${x + 5.5} 262v99M${x + W - 5.5} 262v99`} stroke={color} strokeDasharray="12 4" fill="none" />
);

const GhostFrame = ({ x, kind }: { x: number; kind: 'lines' | 'anchors' }) => (
  <g>
    <Dashes x={x} color="#c3c3c3" />
    <path d={`M${x} 257h${W}M${x} 367h${W}`} stroke="#d2d2d2" strokeWidth="2" />
    <path d={`M${x} 257v220M${x + W} 257v220`} stroke="#c4c2c3" strokeWidth="1.500" />
    <path d={`M${x} 380h${W}`} stroke="#c3c7c8" strokeWidth="2" />
    {kind === 'lines' && <path d={`M${x} 358h${W}M${x} 376.500h${W}`} stroke="#c8e2e2" strokeWidth="1.500" />}
    <Anchors x={x} color="#b7c6c5" dark="#b4bdbc" bottom={kind === 'anchors'} />
    {[257, 367].map((y) => [x, x + W].map((a) => <rect key={`${a}${y}`} x={a - 1.5} y={y - 2} width="4" height="4" fill="#cdb8bb" />))}
    <Support x={x} color="#b9d2b9" />
    <Support x={x + W} color="#b9d2b9" />
    {[x, x + W].map((a) => <rect key={a} x={a - 2} y="475" width="4" height="4" fill="#d8b0ae" />)}
  </g>
);

const Ground = ({ x }: { x: number }) => (
  <g>
    <line x1="0" x2="110%" y1="476.500" y2="476.500" stroke="#bfdedd" />
    <line x1="0" x2="110%" y1="477.500" y2="477.500" stroke="#2f8f8e" />
    <line x1={x - 73.8} x2="110%" y1="477.500" y2="477.500" stroke="#111" strokeDasharray="1 35.700" />
  </g>
);

const GridLines = ({ x, color }: { x: number; color: string }) => (
  <path
    d={Array.from({ length: 19 }, (_, i) => `M${Math.round(x + STEP * (i + 1)) + 0.5} 257v110`).join('')
      + [275.5, 293.5, 312.5, 330.5, 348.5].map((y) => `M${x} ${y}h${W}`).join('')}
    stroke={color}
    strokeDasharray="1 1"
  />
);

const Leader = ({ x }: { x: number }) => (
  <g>
    <path d={`M${x} 252V183.500h13`} fill="none" stroke="#000080" />
    <path d={`M${x - 3} 245h6l-3 11z`} fill="#000080" />
    <text x={x + 14} y="188" fontFamily="Liberation Sans, sans-serif" fontSize="10" fontWeight="bold" fill="#000080">1.1 Lineal y acoplamiento total</text>
  </g>
);

const ActiveFrame = ({ x }: { x: number }) => (
  <g>
    <path d={`M${x} 257h${W}M${x} 367h${W}`} stroke="#6f6f6f" strokeWidth="2" />
    <path d={`M${x} 257v220M${x + W} 257v220`} stroke="#222" strokeWidth="1.300" />
    {[257, 367, 477].map((y) => [x, x + W].map((a) => <rect key={`${a}${y}`} x={a - 2} y={y - 2} width="4" height="4" fill="#8b0000" />))}
  </g>
);

const RED = [[2, 380], [3, 375], [4, 367], [5, 360], [6, 355], [7, 351], [8, 348], [9, 346.5], [10, 346]];
const BLUE = [[1, 416.5], [2, 413], [3, 409], [4, 406.5], [5, 405.5], [6, 405.5], [7, 405.5], [8, 405.5], [9, 405.5], [10, 405.5]];
const mirrored = (pts: number[][]) => [...pts, ...pts.slice(0, -1).reverse().map(([i, y]) => [20 - i, y])];

const Reinforcement = ({ x }: { x: number }) => {
  const red = mirrored(RED).map(([i, y]) => [x + i * STEP, y]);
  const blue = mirrored(BLUE).map(([i, y]) => [x + i * STEP, y]);
  return (
    <g fill="none" strokeWidth="1.200">
      <path d={red.map(([a, y]) => `M${a} 380V${y}`).join('')} stroke="#ff3b3b" />
      <polyline points={red.join(' ')} stroke="#f21c1c" />
      <path d={`M${x} 360l18 20M${x + W} 360l-18 20`} stroke="#f21c1c" />
      <path d={blue.map(([a, y]) => `M${a} 380V${y}`).join('')} stroke="#2323f0" />
      <polyline points={blue.join(' ')} stroke="#2323f0" />
      <path d={`M${x} 380l18 16M${x + W} 380l-18 16`} stroke="#2323f0" />
      <path d={`M${x} 380h${W}`} stroke="#cc3a58" strokeWidth="2" />
      <g fontFamily="Liberation Sans, sans-serif" fontSize="9" fill="#e80000" stroke="none">
        <text x={x + W / 2} y="339" textAnchor="middle">4.98</text>
        <text x={x + 5} y="352">3.09</text>
        <text x={x + W - 5} y="352" textAnchor="end">3.09</text>
        <text x={x + 10} y="431" fill="#0000e0">5.39</text>
      </g>
    </g>
  );
};

/* Contour polygons are given in thirds of a pixel. */
const BANDS: [string, string][] = [
  ['#0099ff', '402,801 430,765 462,745 490,710 510,685 545,628 582,578 605,550 655,513 708,483 745,471 893,471 932,483 985,515 1036,552 1060,582 1094,628 1138,690 1175,743 1210,765 1240,801'],
  ['#00f6f6', '410,801 435,772 490,738 545,695 600,645 655,598 710,555 765,522 820,512 875,522 930,555 985,598 1040,645 1095,695 1150,738 1207,772 1232,801'],
  ['#00e68a', '418,801 440,779 525,745 600,703 655,665 710,622 765,585 820,568 875,585 930,622 985,665 1040,703 1115,745 1200,779 1224,801'],
  ['#00ff00', '425,801 440,791 545,770 625,737 710,690 765,650 820,628 875,650 930,690 1015,737 1095,770 1200,791 1216,801'],
  ['#ffff00', '608,801 680,770 735,743 790,708 820,685 850,708 905,743 960,770 1032,801'],
];
/* Shapes along the left edge; the right edge mirrors them. */
const SIDE: [string, string][] = [
  ['#0000a0', '269,690 300,660 350,637 380,580 432,637 430,690 410,750 383,801 269,801'],
  ['#0099ff', '269,525 300,527 326,580 300,620 269,652'],
  ['#00f6f6', '269,543 290,548 310,580 285,610 269,622'],
  ['#00e68a', '269,558 276,560 290,580 269,605'],
  ['#0099ff', '318,471 358,471 322,516'],
  ['#00f6f6', '318,471 350,471 322,506'],
  ['#00e68a', '318,471 338,471 322,492'],
  ['none', '269,516 290,492 305,474'],
];

const Contours = () => (
  <g transform="translate(0 100) scale(.333333)" stroke="#8e1c10" strokeWidth="3">
    <rect x="269" y="471" width="1101" height="330" fill="#0000ff" stroke="none" />
    {SIDE.map(([c, p], i) => <polygon key={i} points={p} fill={c} />)}
    <g transform="translate(1639 0) scale(-1 1)">{SIDE.map(([c, p], i) => <polygon key={i} points={p} fill={c} />)}</g>
    {BANDS.map(([c, p]) => <polygon key={c} points={p} fill={c} />)}
  </g>
);

const TOP_X = [86.5, 490, 893.5, 1297];
const LOW_X = [89.5, 493.5, 897, 1300.5];

const Ghosts = ({ xs }: { xs: number[] }) => (
  <g>{xs.slice(1).map((x, i) => <GhostFrame key={x} x={x} kind={i === 0 ? 'lines' : 'anchors'} />)}</g>
);

const ReinforcementModel = () => (
  <Canvas role="img" aria-label="Armadura">
    <g transform="translate(-12 -134)">
      <Ground x={TOP_X[0]} />
      <Ghosts xs={TOP_X} />
      <GridLines x={86.5} color="#adadad" />
      <Dashes x={86.5} color="#9a9a9a" />
      <Support x={86.5} color="#00ff00" />
      <Support x={453.5} color="#00ff00" />
      <ActiveFrame x={86.5} />
      <Anchors x={86.5} color="#0c8080" dark="#0b4a4a" />
      <Reinforcement x={86.5} />
      <Leader x={86.5} />
    </g>
  </Canvas>
);

const ForcesModel = () => (
  <Canvas role="img" aria-label="Esfuerzos internos">
    <g transform="translate(-12 -110)">
      <Ground x={LOW_X[0]} />
      <Ghosts xs={LOW_X} />
      <Contours />
      <path d="M89.500 380h367" stroke="#a6c8ee" strokeWidth="2" />
      <GridLines x={89.5} color="#b5b5a8" />
      <Dashes x={89.5} color="#b8b8b8" />
      <Anchors x={89.5} color="#0c8080" dark="#0b4a4a" />
      <Support x={89.5} color="#00ff00" />
      <Support x={456.5} color="#00ff00" />
      <ActiveFrame x={89.5} />
      <Leader x={89.5} />
    </g>
  </Canvas>
);

const ModelWindow = ({ head, foot, footLine, children }: { head: string; foot: string; footLine: number; children: ReactNode }) => (
  <Window>
    <WindowTitle>
      <svg width="16" height="12" aria-hidden="true">
        <path d="M0 0h16v12H0z" fill="#1b2560" />
        <path d="M0 8h16M7 1v10M7 2L1 7.500M8 2l6 5.500M4 11V8" stroke="#fff" strokeWidth="1.200" />
      </svg>
      <h2>001598-model-file-1*</h2>
      <WinButton aria-label="Minimizar"><svg width="12" height="10"><rect x="1.500" y="5.500" width="10" height="3.500" rx="1" fill="#fff" stroke="#4c5561" /></svg></WinButton>
      <WinButton aria-label="Maximizar"><svg width="12" height="10"><rect x="1" y="1" width="10" height="8" rx="1" fill="#fff" stroke="#4c5561" strokeWidth="1.300" /><rect x="4" y="3.500" width="4" height="2.500" fill="#b6cce4" stroke="#4c5561" /></svg></WinButton>
      <WinButton $close aria-label="Cerrar"><svg width="12" height="10"><path d="M2.500 1.500l7 7M9.500 1.500l-7 7" stroke="#54383c" strokeWidth="4.200" /><path d="M2.500 1.500l7 7M9.500 1.500l-7 7" stroke="#fff" strokeWidth="2.400" /></svg></WinButton>
    </WindowTitle>
    <Viewport>
      {children}
      <Caption $line={14}>{head}</Caption>
      <Caption $line={footLine}>{foot}</Caption>
    </Viewport>
  </Window>
);

/* ---------- side panels ---------- */

const Panel = styled.aside<{ $docked?: boolean }>`
  display: flex;
  flex-direction: column;
  min-height: 0;
  padding: ${(p) => (p.$docked ? '0 3px 0 3px' : '5px 1px 0 6px')};
  background: #e9eff9;
  border-bottom: 2px solid #a9b0bc;
`;
const PanelHead = styled.div<{ $docked?: boolean }>`
  display: flex;
  align-items: center;
  justify-content: space-between;
  height: ${(p) => (p.$docked ? 27 : 23)}px;
  padding: ${(p) => (p.$docked ? 4 : 0)}px 2px 0;
  background: ${(p) => (p.$docked ? 'transparent' : '#b9c1cc')};
  h2 {
    margin: 0;
    font-family: ${SEGOE};
    font-size: 11px;
    font-weight: 600;
    color: #4a4f57;
  }
  button {
    border: 0;
    padding: 2px;
    background: none;
  }
`;
const PanelBody = styled.div`
  flex: 1;
  display: flex;
  flex-direction: column;
  min-height: 0;
  padding: 4px 3px 8px 5px;
  border: 1px solid #a3afc4;
  border-bottom-color: #6f747c;
  background: #efefef;
`;
const ModuleName = styled.p`
  margin: 0 0 17px;
  font-family: ${ARIAL};
  font-size: 11px;
  line-height: 17px;
  white-space: nowrap;
`;
const ResultName = styled.p`
  margin: 0 0 2px;
  font-family: Roboto, ${ARIAL};
  font-size: 11px;
  line-height: 16px;
  white-space: nowrap;
  sub { font-size: 9px; line-height: 1; vertical-align: -1px; }
`;
const Well = styled.div`
  display: flex;
  border: 1px solid #9b9b9b;
  border-right-color: #fbfbfb;
  border-bottom-color: #fbfbfb;
  background: #f8f6ef;
`;
const Legend = styled.ul`
  list-style: none;
  height: 271px;
  margin: 0;
  padding: 5px 0 0 25px;
  li {
    display: flex;
    gap: 7px;
    height: 25px;
    margin-bottom: 5px;
    font-family: ${ARIAL};
    font-size: 11px;
    line-height: 15px;
    white-space: nowrap;
  }
`;
const Swatch = styled.span<{ $c: string }>`
  width: 11px;
  background: ${(p) => p.$c};
`;
const ModuleButton = styled.button`
  height: 23px;
  margin-top: 9px;
  padding: 0;
  border: 2px solid #0078d7;
  background: #e1e1e1;
  font-family: ${ARIAL};
  font-size: 11px;
  line-height: 17px;
  white-space: nowrap;
`;
const Scale = styled.div`
  width: 33px;
  margin: 10px 0 14px 32px;
`;
const Band = styled.div<{ $c: string }>`
  display: grid;
  grid-template-columns: 27px 6px;
  height: 17px;
  &::before {
    content: '';
    background: ${(p) => p.$c};
    border: 1px solid #000;
    border-bottom: 0;
  }
  &::after {
    content: '';
    border-top: 1px solid #000;
  }
`;
const ScaleEnd = styled.div`
  border-top: 1px solid #000;
`;
const Values = styled.ol`
  list-style: none;
  flex: 1;
  margin: 1px 32px 0 0;
  padding: 0;
  text-align: right;
  font-family: ${ARIAL};
  font-size: 11px;
  line-height: 17px;
`;
const Extremes = styled.dl`
  display: grid;
  grid-template-columns: 27px 1fr;
  margin: 9px 0 0;
  padding: 0 30px;
  border: 1px solid #dfe6f2;
  border-right-color: #a5a8ec;
  border-bottom-color: #a5a8ec;
  background: #eff3f9;
  font-family: ${TAHOMA};
  font-size: 11px;
  line-height: 17px;
  dt { display: flex; justify-content: space-between; }
  dd { margin: 0; text-align: right; }
`;
const DetailButton = styled.button`
  display: grid;
  place-items: center;
  width: 25px;
  height: 21px;
  margin: auto 0 0 auto;
  padding: 0;
  border: 1px solid #a5a5a5;
  outline: 1px dotted #222;
  outline-offset: -3px;
  background: #dcdcdc;
`;
const Tabs = styled.div`
  display: flex;
  align-items: center;
  gap: 8px;
  height: 22px;
  padding-left: 3px;
  background: #d0d3dd;
`;
const Tab = styled.button<{ $on?: boolean }>`
  display: grid;
  place-items: center;
  width: 22px;
  height: 20px;
  padding: 0;
  border: 0;
  border-radius: 0 0 3px 3px;
  background: ${(p) => (p.$on ? '#f1f4f9' : 'none')};
  box-shadow: ${(p) => (p.$on ? '1px 1px 0 #b5e0e4' : 'none')};
`;

const CloseX = () => (
  <button aria-label="Cerrar panel"><svg width="9" height="9"><path d="M1 1l7 7M8 1L1 8" stroke="#6b6f76" strokeWidth="1.200" /></svg></button>
);
const PanelTabs = () => (
  <Tabs role="tablist">
    <Tab role="tab" $on aria-label="Escala de colores"><Icon name="legend" size={18} /></Tab>
    <Tab role="tab" aria-label="Factores"><Icon name="scales" size={18} /></Tab>
    <Tab role="tab" aria-label="Filtro"><Icon name="microscope" size={18} /></Tab>
  </Tabs>
);

const COLORS = ['#b80000', '#ff0000', '#ffa500', '#cccc00', '#ffff00', '#00ff00', '#00e68a', '#00f8f8', '#0099ff', '#0000ff', '#0000a0'];
const VALUES = ['320.00', '200.00', '127.27', '90.91', '54.55', '18.18', '-18.18', '-54.55', '-90.91', '-127.27', '-200.00', '-4400.00'];

/* ---------- status bar ---------- */

const StatusBar = styled.footer`
  display: flex;
  align-items: stretch;
  justify-content: flex-end;
  gap: 2px;
  height: 26px;
  padding-top: 3px;
  border-top: 1px solid #7c8088;
  background: linear-gradient(#cfd2d8, #a7abb4 50%, #c5c8d0);
  font-family: ${ARIAL};
  font-size: 11px;
  line-height: 17px;
  color: #26292e;
`;
const Toggle = styled.button<{ $w: number }>`
  width: ${(p) => p.$w}px;
  padding: 0;
  margin-bottom: 2px;
  border: 1px solid;
  border-color: #111 #f0f0f3 #f0f0f3 #111;
  background: none;
  line-height: 16px;
`;
const StatusCell = styled.span<{ $w: number; $last?: boolean }>`
  width: ${(p) => p.$w}px;
  padding: 1px 0 0 3px;
  border-right: ${(p) => (p.$last ? 0 : 1)}px solid #90949c;
`;

const TOGGLES: [string, number][] = [['FORZC', 44], ['REJILLA', 46], ['CARTES', 48], ['REFENT', 47], ['GLN', 28], ['DXF', 27]];

export default function App() {
  return (
    <Shell>
      <Global />
      <TitleBar>
        <svg width="16" height="16" aria-hidden="true">
          <path d="M5 4l6-3 4 4-2 7-5 3-4-5z" fill="#5f7496" stroke="#2a3a56" />
          <path d="M8 4l4 1 1 5M8 4l1 7" stroke="#b9c8de" fill="none" />
          <text x="1" y="14" fontFamily="Liberation Sans, sans-serif" fontWeight="bold" fontSize="11" fill="#f2c832" stroke="#6e5410" strokeWidth=".5">5</text>
        </svg>
        <AppTitle>RFEM 5.21.01 x64 - 001598-model-file-1</AppTitle>
        <SysButton aria-label="Minimizar"><svg width="10" height="10"><path d="M0 5.500h10" stroke="#000" /></svg></SysButton>
        <SysButton aria-label="Restaurar"><svg width="10" height="10"><path d="M.5 2.500h7v7h-7zM2.500 2.500v-2h7v7h-2" fill="none" stroke="#000" /></svg></SysButton>
        <SysButton aria-label="Cerrar"><svg width="10" height="10"><path d="M0 0l10 10M10 0L0 10" stroke="#000" /></svg></SysButton>
      </TitleBar>
      <MenuBar>
        <Grip />
        {MENU.map(([a, key, b]) => <MenuItem key={key + b}>{a}<u>{key}</u>{b}</MenuItem>)}
      </MenuBar>
      <ToolRow>{ROW1.map((s) => <Tools key={s} spec={s} />)}</ToolRow>
      <ToolRow>{ROW2.map((s) => <Tools key={s} spec={s} />)}</ToolRow>
      <Workspace>
        <ModelWindow
          head="RF-CONCRETE Members CA1 - Cálculo de barras de hormigón"
          foot={'Max A-s,+z (inferior): 5.39 cm^2\nMax A-s,-z (superior): 4.98 cm^2'}
          footLine={10}
        >
          <ReinforcementModel />
        </ModelWindow>
        <Panel>
          <PanelHead><h2>Panel</h2><CloseX /></PanelHead>
          <PanelBody>
            <ModuleName>RF-CONCRETE Members</ModuleName>
            <Well>
              <Legend>
                <li><Swatch $c="#ff0000" />A-s,-z (superior)</li>
                <li><Swatch $c="#0000ff" />A-s,+z (inferior)</li>
              </Legend>
            </Well>
            <ModuleButton>RF-CONCRETE Members</ModuleButton>
          </PanelBody>
          <PanelTabs />
        </Panel>
        <ModelWindow
          head={'Modo de visibilidad\nEsfuerzos internos principales n-2 [kN/m]\nCC1 : Peso propio'}
          foot="Máx.n-2: 83.42, Mín. n-2: -916.85 kN/m"
          footLine={12}
        >
          <ForcesModel />
        </ModelWindow>
        <Panel $docked>
          <PanelHead $docked><h2>Panel</h2><CloseX /></PanelHead>
          <PanelBody>
            <ResultName>Esfuerzos internos principales<br />n<sub>2</sub> [kN/m]</ResultName>
            <Well>
              <Scale>
                {COLORS.map((c) => <Band key={c} $c={c} />)}
                <ScaleEnd />
              </Scale>
              <Values>{VALUES.map((v) => <li key={v}>{v}</li>)}</Values>
            </Well>
            <Extremes>
              <dt><span>Máx</span><span>:</span></dt><dd>83.42</dd>
              <dt><span>Mín</span><span>:</span></dt><dd>-916.85</dd>
            </Extremes>
            <DetailButton aria-label="Detalles"><Icon name="detail" size={18} /></DetailButton>
          </PanelBody>
          <PanelTabs />
        </Panel>
      </Workspace>
      <StatusBar>
        {TOGGLES.map(([t, w]) => <Toggle key={t} $w={w}>{t}</Toggle>)}
        <StatusCell $w={190}>Modo de visibilidad</StatusCell>
        <StatusCell $w={86} />
        <StatusCell $w={72} />
        <StatusCell $w={72} />
        <StatusCell $w={72} $last />
      </StatusBar>
    </Shell>
  );
}
